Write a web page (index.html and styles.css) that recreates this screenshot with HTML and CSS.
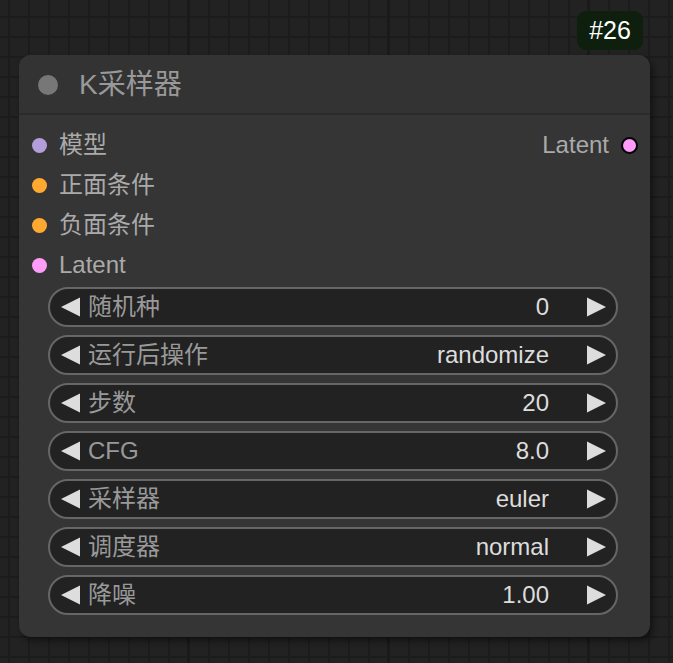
FILE: index.html
```html
<!DOCTYPE html>
<html lang="zh-CN">
<head>
<meta charset="utf-8">
<title>K采样器</title>
<link rel="stylesheet" href="styles.css">
</head>
<body>
<div class="canvas">
  <div class="badge">#26</div>
  <div class="node">
    <div class="title">
      <span class="title-dot"></span>
      <span class="title-text">K采样器</span>
    </div>
    <div class="slots">
      <div class="slot-row">
        <div class="slot-in"><span class="dot dot-model"></span><span class="slot-label">模型</span></div>
        <div class="slot-out"><span class="slot-label">Latent</span><span class="dot dot-out"></span></div>
      </div>
      <div class="slot-row">
        <div class="slot-in"><span class="dot dot-cond"></span><span class="slot-label">正面条件</span></div>
      </div>
      <div class="slot-row">
        <div class="slot-in"><span class="dot dot-cond"></span><span class="slot-label">负面条件</span></div>
      </div>
      <div class="slot-row">
        <div class="slot-in"><span class="dot dot-latent"></span><span class="slot-label">Latent</span></div>
      </div>
    </div>
    <div class="widgets">
      <div class="widget">
        <svg class="arrow" viewBox="0 0 20 20"><polygon points="20,0 20,20 0,10"/></svg>
        <span class="w-label">随机种</span><span class="w-value">0</span>
        <svg class="arrow" viewBox="0 0 20 20"><polygon points="0,0 0,20 20,10"/></svg>
      </div>
      <div class="widget">
        <svg class="arrow" viewBox="0 0 20 20"><polygon points="20,0 20,20 0,10"/></svg>
        <span class="w-label">运行后操作</span><span class="w-value">randomize</span>
        <svg class="arrow" viewBox="0 0 20 20"><polygon points="0,0 0,20 20,10"/></svg>
      </div>
      <div class="widget">
        <svg class="arrow" viewBox="0 0 20 20"><polygon points="20,0 20,20 0,10"/></svg>
        <span class="w-label">步数</span><span class="w-value">20</span>
        <svg class="arrow" viewBox="0 0 20 20"><polygon points="0,0 0,20 20,10"/></svg>
      </div>
      <div class="widget">
        <svg class="arrow" viewBox="0 0 20 20"><polygon points="20,0 20,20 0,10"/></svg>
        <span class="w-label">CFG</span><span class="w-value">8.0</span>
        <svg class="arrow" viewBox="0 0 20 20"><polygon points="0,0 0,20 20,10"/></svg>
      </div>
      <div class="widget">
        <svg class="arrow" viewBox="0 0 20 20"><polygon points="20,0 20,20 0,10"/></svg>
        <span class="w-label">采样器</span><span class="w-value">euler</span>
        <svg class="arrow" viewBox="0 0 20 20"><polygon points="0,0 0,20 20,10"/></svg>
      </div>
      <div class="widget">
        <svg class="arrow" viewBox="0 0 20 20"><polygon points="20,0 20,20 0,10"/></svg>
        <span class="w-label">调度器</span><span class="w-value">normal</span>
        <svg class="arrow" viewBox="0 0 20 20"><polygon points="0,0 0,20 20,10"/></svg>
      </div>
      <div class="widget">
        <svg class="arrow" viewBox="0 0 20 20"><polygon points="20,0 20,20 0,10"/></svg>
        <span class="w-label">降噪</span><span class="w-value">1.00</span>
        <svg class="arrow" viewBox="0 0 20 20"><polygon points="0,0 0,20 20,10"/></svg>
      </div>
    </div>
  </div>
</div>
</body>
</html>
```

FILE: styles.css
```css
html, body {
  margin: 0;
  padding: 0;
}
body {
  width: 673px;
  height: 663px;
  overflow: hidden;
  font-family: "Liberation Sans", Arial, "Noto Sans CJK SC", sans-serif;
}
.canvas {
  position: relative;
  width: 673px;
  height: 663px;
  background-color: #222222;
  background-image:
    linear-gradient(to right, transparent 187px, #1a1a1a 187px, #1a1a1a 190px, transparent 190px),
    linear-gradient(to right, transparent 8px, #1c1c1c 8px, #1c1c1c 10px, transparent 10px),
    linear-gradient(to bottom, transparent 16px, #1c1c1c 16px, #1c1c1c 18px, transparent 18px);
  background-size: 200px 663px, 20px 20px, 20px 20px;
  background-position: 0 0, 0 0, 0 0;
}
.badge {
  position: absolute;
  left: 577px;
  top: 11px;
  width: 66px;
  height: 39px;
  box-sizing: border-box;
  background: #0e1f0e;
  border-radius: 9px;
  color: #ffffff;
  font-size: 25px;
  line-height: 39px;
  text-align: center;
}
.node {
  position: absolute;
  left: 19px;
  top: 55px;
  width: 631px;
  height: 582px;
  background: #353535;
  border-radius: 12px;
  box-shadow: 3px 4px 6px rgba(0, 0, 0, 0.45);
  overflow: hidden;
}
.title {
  height: 60px;
  background: #333333;
  border-bottom: 2px solid #2b2b2b;
  box-sizing: border-box;
  display: flex;
  align-items: center;
  padding-left: 19px;
}
.title-dot {
  width: 20px;
  height: 20px;
  border-radius: 50%;
  background: #777777;
  margin-right: 21px;
  margin-top: 1px;
}
.title-text {
  color: #999999;
  font-size: 28px;
  line-height: 32px;
  height: 32px;
  margin-top: 2px;
}
.slots {
  padding-top: 10px;
}
.slot-row {
  height: 40px;
  display: flex;
  align-items: center;
  justify-content: space-between;
}
.slot-in {
  display: flex;
  align-items: center;
  padding-left: 13px;
}
.slot-out {
  display: flex;
  align-items: center;
  padding-right: 12px;
}
.slot-label {
  color: #aaaaaa;
  font-size: 24px;
  line-height: 28px;
  height: 28px;
}
.dot {
  display: inline-block;
  border-radius: 50%;
}
.slot-in .dot {
  width: 15px;
  height: 15px;
  margin-right: 12px;
}
.dot-model { background: #b39ddb; }
.dot-cond { background: #ffa931; }
.dot-latent { background: #ff9cf9; }
.dot-out {
  width: 13px;
  height: 13px;
  background: #ff9cf9;
  border: 2px solid #000000;
  margin-left: 12px;
}
.widgets {
  padding-top: 2px;
  padding-left: 29px;
  display: flex;
  flex-direction: column;
  gap: 8px;
}
.widget {
  width: 570px;
  height: 40px;
  box-sizing: border-box;
  background: #222222;
  border: 2px solid #666666;
  border-radius: 20px;
  display: flex;
  align-items: center;
  padding-left: 11px;
  padding-right: 10px;
}
.arrow {
  width: 19px;
  height: 20px;
  fill: #dddddd;
  flex: none;
}
.w-label {
  color: #999999;
  font-size: 24px;
  line-height: 28px;
  height: 28px;
  margin-left: 8px;
  flex: 1;
  white-space: nowrap;
}
.w-value {
  color: #dddddd;
  font-size: 24px;
  line-height: 28px;
  height: 28px;
  margin-right: 38px;
  white-space: nowrap;
}
```
